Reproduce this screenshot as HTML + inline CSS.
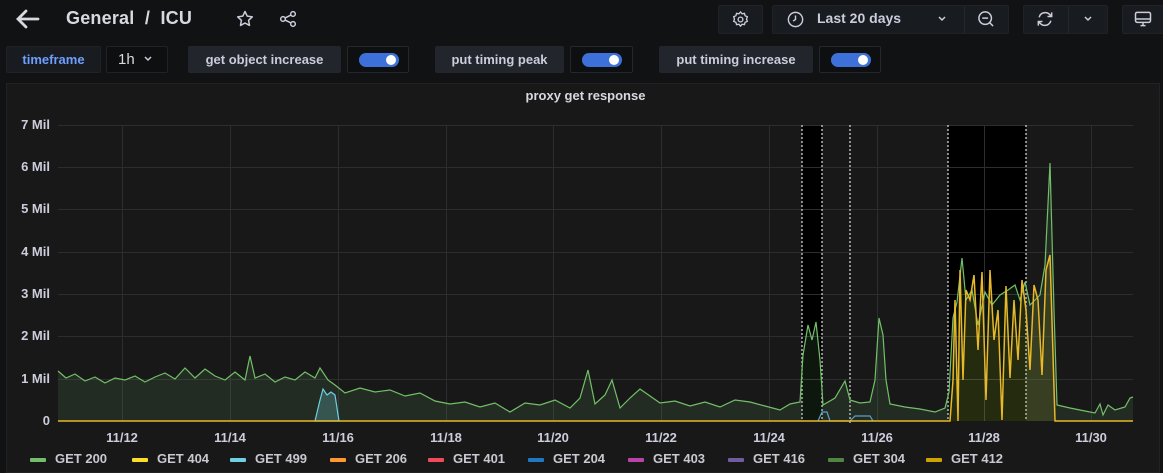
<!DOCTYPE html>
<html><head><meta charset="utf-8"><style>
*{box-sizing:border-box;margin:0;padding:0}
body{width:1163px;height:467px;background:#111214;font-family:"Liberation Sans",sans-serif;color:#ccccdc;overflow:hidden;position:relative}
.a{position:absolute}
.btn{position:absolute;border:1px solid #202226;background:#181b1f;border-radius:2px}
.lbl{position:absolute;top:46px;height:27px;background:#22252b;border-radius:2px;font-size:13px;font-weight:bold;line-height:27px;text-align:center;color:#ccccdc}
.tg{position:absolute;top:46px;height:27px;border:1px solid #25272c;background:#0e0f11;border-radius:2px}
.tg i{position:absolute;left:11px;top:6px;width:40px;height:14px;border-radius:7px;background:#3d71d9}
.tg i:after{content:"";position:absolute;right:3px;top:2px;width:10px;height:10px;border-radius:50%;background:#fff}
.yl{position:absolute;right:1113px;font-size:13px;font-weight:bold;color:#ccccdc;text-align:right}
.xl{position:absolute;top:430px;font-size:13px;font-weight:bold;color:#ccccdc;transform:translateX(-50%)}
.lg{position:absolute;top:451px;font-size:13px;font-weight:bold;color:#c8c8d0;white-space:nowrap}
.lg b{display:inline-block;width:16px;height:4px;vertical-align:middle;margin-right:9px;border-radius:1px}
</style></head><body>
<svg class="a" style="left:14px;top:8px" width="28" height="22" viewBox="0 0 28 22"><path d="M24 11H5M12 3L4 11l8 8" stroke="#d8d9e0" stroke-width="2.8" fill="none" stroke-linecap="round"/></svg>
<div class="a" style="left:66px;top:8px;font-size:18px;font-weight:bold;color:#d8d9e0;letter-spacing:0.2px">General&nbsp; /&nbsp; ICU</div>
<svg class="a" style="left:235px;top:9px" width="20" height="20" viewBox="0 0 24 24"><path d="M12 3l2.7 5.6 6.1.8-4.5 4.2 1.1 6.1L12 16.8l-5.4 2.9 1.1-6.1L3.2 9.4l6.1-.8z" stroke="#ccccdc" stroke-width="1.8" fill="none" stroke-linejoin="round"/></svg>
<svg class="a" style="left:278px;top:9px" width="20" height="20" viewBox="0 0 24 24"><g stroke="#ccccdc" stroke-width="1.8" fill="none"><circle cx="18" cy="6" r="2.8"/><circle cx="6" cy="12" r="2.8"/><circle cx="18" cy="18" r="2.8"/><path d="M8.5 10.7l7-3.4M8.5 13.3l7 3.4"/></g></svg>
<div class="btn" style="left:718px;top:5px;width:45px;height:29px"></div>
<svg class="a" style="left:731px;top:10px" width="19" height="19" viewBox="0 0 24 24"><g stroke="#ccccdc" stroke-width="1.7" fill="none"><circle cx="12" cy="12" r="3"/><path d="M12 2.5l2 2.3 3-.5.8 2.9 2.8 1.3-1 2.9 1 2.9-2.8 1.3-.8 2.9-3-.5-2 2.3-2-2.3-3 .5-.8-2.9-2.8-1.3 1-2.9-1-2.9 2.8-1.3.8-2.9 3 .5z"/></g></svg>
<div class="btn" style="left:772px;top:5px;width:237px;height:29px"></div>
<div class="a" style="left:964px;top:6px;width:1px;height:27px;background:#25272c"></div>
<svg class="a" style="left:786px;top:10px" width="19" height="19" viewBox="0 0 24 24"><g stroke="#ccccdc" stroke-width="1.8" fill="none"><circle cx="12" cy="12" r="9"/><path d="M12 7v5l-3 2"/></g></svg>
<div class="a" style="left:817px;top:10px;font-size:14px;font-weight:bold;color:#ccccdc">Last 20 days</div>
<svg class="a" style="left:937px;top:15px" width="10" height="8" viewBox="0 0 10 8"><path d="M2 2l3 3 3-3" stroke="#ccccdc" stroke-width="1.5" fill="none"/></svg>
<svg class="a" style="left:976px;top:9px" width="20" height="20" viewBox="0 0 24 24"><g stroke="#ccccdc" stroke-width="1.8" fill="none"><circle cx="11" cy="11" r="7.5"/><path d="M7.5 11h7M16.5 16.5l4 4"/></g></svg>
<div class="btn" style="left:1023px;top:5px;width:85px;height:29px"></div>
<div class="a" style="left:1068px;top:6px;width:1px;height:27px;background:#25272c"></div>
<svg class="a" style="left:1035px;top:9px" width="20" height="20" viewBox="0 0 24 24"><g stroke="#ccccdc" stroke-width="1.8" fill="none"><path d="M5 10a7.5 7.5 0 0 1 13-3l2 2M19 14a7.5 7.5 0 0 1-13 3l-2-2M20 4v5h-5M4 20v-5h5"/></g></svg>
<svg class="a" style="left:1083px;top:15px" width="10" height="8" viewBox="0 0 10 8"><path d="M2 2l3 3 3-3" stroke="#ccccdc" stroke-width="1.5" fill="none"/></svg>
<div class="btn" style="left:1122px;top:5px;width:50px;height:29px"></div>
<svg class="a" style="left:1133px;top:9px" width="20" height="20" viewBox="0 0 24 24"><g stroke="#ccccdc" stroke-width="1.8" fill="none"><rect x="3" y="4" width="18" height="12" rx="2"/><path d="M3 12h18M9 20h6M12 16v4"/></g></svg>

<div class="btn" style="left:6px;top:46px;width:95px;height:27px;background:#181b1f;text-align:center;line-height:25px;font-size:13px;font-weight:bold;color:#6e9fff">timeframe</div>
<div class="btn" style="left:106px;top:46px;width:62px;height:27px;background:#0e0f11;font-size:15px;line-height:25px;padding-left:11px;color:#d8d9e0">1h</div>
<svg class="a" style="left:143px;top:55px" width="10" height="8" viewBox="0 0 10 8"><path d="M2 2l3 3 3-3" stroke="#ccccdc" stroke-width="1.5" fill="none"/></svg>
<div class="lbl" style="left:188px;width:153px">get object increase</div>
<div class="tg" style="left:347px;width:62px"><i></i></div>
<div class="lbl" style="left:435px;width:129px">put timing peak</div>
<div class="tg" style="left:570px;width:63px"><i></i></div>
<div class="lbl" style="left:659px;width:154px">put timing increase</div>
<div class="tg" style="left:819px;width:62px"><i></i></div>

<div class="a" style="left:6px;top:83px;width:1154px;height:390px;background:#181818;border:1px solid #222"></div>
<div class="a" style="left:0;width:1163px;top:88px;text-align:center;font-size:13px;font-weight:bold;color:#d8d9e0;padding-left:8px">proxy get response</div>

<svg class="a" style="left:0;top:0" width="1163" height="467">
<rect x="802" y="125" width="20" height="296" fill="#000"/>
<rect x="948" y="125" width="78" height="296" fill="#000"/>
<g stroke="#2c2d30" stroke-width="1">
<path d="M58 125.5H1133M58 167.5H1133M58 209.5H1133M58 252.5H1133M58 294.5H1133M58 336.5H1133M58 379.5H1133"/>
<path d="M122.5 125V421M230.5 125V421M338.5 125V421M446.5 125V421M553.5 125V421M661.5 125V421M769.5 125V421M877.5 125V421M984.5 125V421M1091.5 125V421"/>
</g>
<g stroke="#d0d0d0" stroke-width="1.3" stroke-dasharray="2,2">
<path d="M802 125V421M822 125V421M850 125V425M948 125V421M1026 125V421"/>
</g>
<path d="M58,371 66,378 75,374 85,381 95,377 105,383 115,378 125,380 135,376 145,382 155,377 165,373 175,379 185,368 195,378 205,369 215,376 225,380 235,372 245,380 250,356 255,378 265,374 275,382 285,377 295,380 305,372 315,378 320,368 328,380 335,385 345,393 360,388 375,392 390,390 405,396 420,393 435,401 450,404 465,402 480,407 495,403 510,412 525,403 540,405 555,400 570,408 580,398 588,370 595,404 605,395 612,380 620,408 630,398 640,389 650,396 660,403 675,401 690,406 705,402 720,407 735,400 750,402 765,406 780,410 790,404 800,402 803,355 808,325 812,340 816,322 820,360 823,405 835,398 845,381 850,400 860,403 870,402 875,380 879,318 883,335 886,380 890,404 905,407 920,409 935,412 945,408 949,392 953,318 957,302 962,258 966,300 972,290 978,325 985,292 992,305 1000,295 1008,290 1015,285 1020,300 1025,282 1030,305 1035,300 1040,295 1045,265 1050,163 1054,310 1057,405 1070,408 1085,411 1095,413 1100,404 1103,415 1108,405 1115,410 1125,407 1130,398 1133,397 1133,421 58,421Z" fill="rgba(115,191,105,0.12)" stroke="none"/>
<polyline points="58,371 66,378 75,374 85,381 95,377 105,383 115,378 125,380 135,376 145,382 155,377 165,373 175,379 185,368 195,378 205,369 215,376 225,380 235,372 245,380 250,356 255,378 265,374 275,382 285,377 295,380 305,372 315,378 320,368 328,380 335,385 345,393 360,388 375,392 390,390 405,396 420,393 435,401 450,404 465,402 480,407 495,403 510,412 525,403 540,405 555,400 570,408 580,398 588,370 595,404 605,395 612,380 620,408 630,398 640,389 650,396 660,403 675,401 690,406 705,402 720,407 735,400 750,402 765,406 780,410 790,404 800,402 803,355 808,325 812,340 816,322 820,360 823,405 835,398 845,381 850,400 860,403 870,402 875,380 879,318 883,335 886,380 890,404 905,407 920,409 935,412 945,408 949,392 953,318 957,302 962,258 966,300 972,290 978,325 985,292 992,305 1000,295 1008,290 1015,285 1020,300 1025,282 1030,305 1035,300 1040,295 1045,265 1050,163 1054,310 1057,405 1070,408 1085,411 1095,413 1100,404 1103,415 1108,405 1115,410 1125,407 1130,398 1133,397" fill="none" stroke="#73bf69" stroke-width="1.2"/>
<polygon points="315,421 320,400 323,389 327,395 331,392 335,395 339,421" fill="rgba(110,208,224,0.25)" stroke="#6ed0e0" stroke-width="1.2"/>
<polyline points="818,421 822,412 827,412 830,421 850,421 855,416 870,416 873,421" fill="none" stroke="#5aa0d0" stroke-width="1.2"/>
<polygon points="950,421 953,380 955,300 958,421 960,270 963,380 966,290 970,300 974,275 978,350 982,272 986,400 990,270 994,340 998,310 1002,420 1006,286 1010,378 1014,300 1018,360 1022,280 1026,310 1030,370 1034,285 1038,300 1042,375 1046,270 1050,255 1055,421" fill="rgba(250,222,42,0.1)" stroke="none"/>
<polyline points="58,421 950,421 953,380 955,300 958,421 960,270 963,380 966,290 970,300 974,275 978,350 982,272 986,400 990,270 994,340 998,310 1002,420 1006,286 1010,378 1014,300 1018,360 1022,280 1026,310 1030,370 1034,285 1038,300 1042,375 1046,270 1050,255 1055,421 1133,421" fill="none" stroke="#e6b82a" stroke-width="1.5"/>
</svg>
<div class="yl" style="top:117px">7 Mil</div>
<div class="yl" style="top:159px">6 Mil</div>
<div class="yl" style="top:201px">5 Mil</div>
<div class="yl" style="top:244px">4 Mil</div>
<div class="yl" style="top:286px">3 Mil</div>
<div class="yl" style="top:328px">2 Mil</div>
<div class="yl" style="top:371px">1 Mil</div>
<div class="yl" style="top:413px">0</div>
<div class="xl" style="left:122px">11/12</div><div class="xl" style="left:230px">11/14</div><div class="xl" style="left:338px">11/16</div><div class="xl" style="left:446px">11/18</div><div class="xl" style="left:553px">11/20</div><div class="xl" style="left:661px">11/22</div><div class="xl" style="left:769px">11/24</div><div class="xl" style="left:877px">11/26</div><div class="xl" style="left:984px">11/28</div><div class="xl" style="left:1091px">11/30</div>
<div class="lg" style="left:30px"><b style="background:#73bf69"></b>GET 200</div>
<div class="lg" style="left:132px"><b style="background:#fade2a"></b>GET 404</div>
<div class="lg" style="left:230px"><b style="background:#6ed0e0"></b>GET 499</div>
<div class="lg" style="left:330px"><b style="background:#ff9830"></b>GET 206</div>
<div class="lg" style="left:428px"><b style="background:#f2495c"></b>GET 401</div>
<div class="lg" style="left:528px"><b style="background:#1f78c1"></b>GET 204</div>
<div class="lg" style="left:628px"><b style="background:#ba43a9"></b>GET 403</div>
<div class="lg" style="left:728px"><b style="background:#705da0"></b>GET 416</div>
<div class="lg" style="left:828px"><b style="background:#508642"></b>GET 304</div>
<div class="lg" style="left:926px"><b style="background:#cca300"></b>GET 412</div>
</body></html>
